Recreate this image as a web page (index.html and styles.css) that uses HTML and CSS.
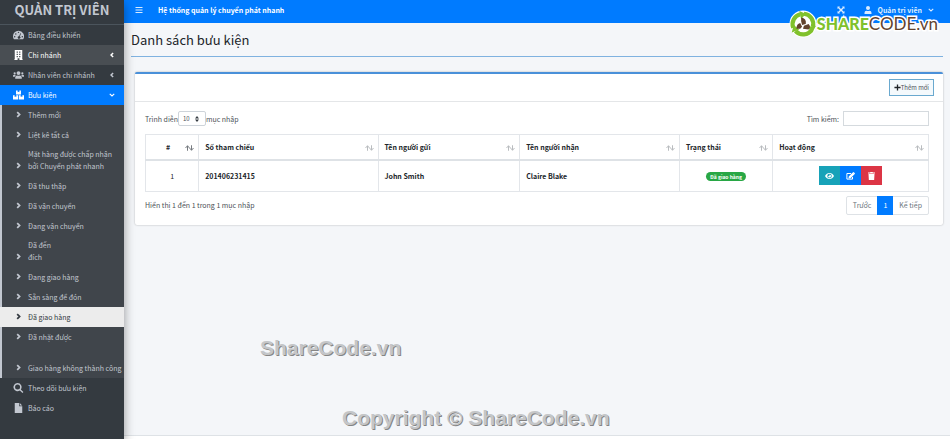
FILE: index.html
```
<!DOCTYPE html>
<html lang="vi">
<head>
    <meta charset="UTF-8">
    <meta name="viewport" content="width=device-width, initial-scale=1.0">
    <title>Danh sách bưu kiện</title>
    <link rel="stylesheet" href="styles.css">
</head>
<body>
    <!-- Icons -->
    <svg class="sprite" aria-hidden="true">
        <symbol id="i-dash" viewBox="0 0 18 16"><path fill-rule="evenodd" d="M9 1a9 9 0 0 0-9 9c0 1.700.4 3.200 1.200 4.600.2.300.5.400.8.400h14c.3 0 .6-.1.800-.4A9 9 0 0 0 9 1zm0 1.500a1.200 1.200 0 1 1 0 2.400 1.200 1.200 0 0 1 0-2.400zM2.800 9.800a1.200 1.200 0 1 1 0 2.400 1.200 1.200 0 0 1 0-2.400zM4.600 5a1.200 1.200 0 1 1 0 2.400A1.200 1.200 0 0 1 4.600 5zm10.600 4.800a1.200 1.200 0 1 1 0 2.400 1.200 1.200 0 0 1 0-2.400zM12 5l1.100.4-1.900 4.900a2.200 2.200 0 1 1-1.100-.4z"/></symbol>
        <symbol id="i-building" viewBox="0 0 14 16"><path fill-rule="evenodd" d="M1 0h12v15h1v1H8.500v-3h-3v3H0v-1h1zM4 2.500v2h2v-2zm4 0v2h2v-2zm-4 3.500v2h2V6zm4 0v2h2V6zM4 9.500v2h2v-2zm4 0v2h2v-2z"/></symbol>
        <symbol id="i-users" viewBox="0 0 20 16"><circle cx="3" cy="5" r="2"/><circle cx="17" cy="5" r="2"/><circle cx="10" cy="4.500" r="3.500"/><path d="M0 11V9.500A2 2 0 0 1 2 7.500h2q1 0 1.400.7A5 5 0 0 0 3.200 11zM20 11V9.500a2 2 0 0 0-2-2h-2q-1 0-1.400.7a5 5 0 0 1 2.200 2.800zM4 15v-2.500A3.500 3.500 0 0 1 7.500 9q2.500 1 5 0a3.500 3.500 0 0 1 3.500 3.500V15z"/></symbol>
        <symbol id="i-boxes" viewBox="0 0 20 16"><path d="M5.500 0h3v3l1.500-.8 1.500.8V0h3v7h-9zM0 8.500h3v3l1.500-.8 1.500.8v-3h3.300V16H0zM10.700 8.500H14v3l1.500-.8 1.500.8v-3h3V16h-9.300z"/></symbol>
        <symbol id="i-search" viewBox="0 0 16 16"><path fill-rule="evenodd" d="M6.500 0a6.500 6.500 0 0 1 5.200 10.300l4.100 4.100-1.500 1.500-4.100-4.100A6.500 6.500 0 1 1 6.500 0zm0 2.500a4 4 0 1 0 0 8 4 4 0 0 0 0-8z"/></symbol>
        <symbol id="i-file" viewBox="0 0 12 16"><path d="M0 0h7v5h5v11H0zM8 0l4 4H8z"/></symbol>
        <symbol id="i-right" viewBox="0 0 10 16"><path d="M2 2.500l5.500 5.500L2 13.500" fill="none" stroke="currentColor" stroke-width="4"/></symbol>
        <symbol id="i-left" viewBox="0 0 10 16"><path d="M8 2.500L2.500 8 8 13.500" fill="none" stroke="currentColor" stroke-width="4"/></symbol>
        <symbol id="i-down" viewBox="0 0 16 10"><path d="M2 2l6 5.500L14 2" fill="none" stroke="currentColor" stroke-width="3"/></symbol>
        <symbol id="i-bars" viewBox="0 0 16 16"><path d="M1 2h14v2H1zM1 7h14v2H1zM1 12h14v2H1z"/></symbol>
        <symbol id="i-expand" viewBox="0 0 16 16"><path d="M1 1h5L4.500 2.500 8 6l3.500-3.500L10 1h5v5l-1.500-1.500L10 8l3.500 3.500L15 10v5h-5l1.500-1.500L8 10l-3.500 3.500L6 15H1v-5l1.500 1.500L6 8 2.500 4.500 1 6z"/></symbol>
        <symbol id="i-user" viewBox="0 0 14 16"><circle cx="7" cy="4" r="4"/><path d="M0 16v-2.500A4.300 4.300 0 0 1 4 9.300q3 1.400 6 0a4.300 4.300 0 0 1 4 4.200V16z"/></symbol>
        <symbol id="i-plus" viewBox="0 0 16 16"><path d="M6.500 1h3v5.500H15v3H9.500V15h-3V9.500H1v-3h5.500z"/></symbol>
        <symbol id="i-sort" viewBox="0 0 18 12"><path class="up" d="M5 1.500v10M1 6l4-4.500L9 6" fill="none"/><path class="down" d="M13 .5v10M9 6l4 4.500L17 6" fill="none"/></symbol>
        <symbol id="i-eye" viewBox="0 0 18 14"><path fill-rule="evenodd" d="M9 1c4 0 7 2.500 9 6-2 3.500-5 6-9 6S2 10.500 0 7c2-3.500 5-6 9-6zm0 1.500a4.500 4.500 0 1 0 0 9 4.500 4.500 0 0 0 0-9zm0 1.500a3 3 0 1 1-3 3l1.500.5L9 6z"/></symbol>
        <symbol id="i-edit" viewBox="0 0 18 16"><path d="M10 3H1.800v11.200H13V10" fill="none" stroke="currentColor" stroke-width="2"/><path d="M13.500 1l3.500 3.500L9 12.300l-4 .6.500-4zM14.200.3q.8-.6 1.500 0l2 2q.6.700 0 1.500l-.5.500-3.500-3.500z"/></symbol>
        <symbol id="i-trash" viewBox="0 0 14 16"><path d="M0 1h4l1-1h4l1 1h4v2H0zM1 4h12l-.7 12H1.700z"/></symbol>
        <symbol id="i-updown" viewBox="0 0 8 12"><path d="M0 5l4-5 4 5zM0 7l4 5 4-5z"/></symbol>
    </svg>

    <aside class="sidebar">
        <a class="brand" href="#">QUẢN TRỊ VIÊN</a>
        <nav class="menu">
            <a class="item" href="#"><svg class="icon"><use href="#i-dash"/></svg>Bảng điều khiển</a>
            <a class="item open" href="#"><svg class="icon"><use href="#i-building"/></svg>Chi nhánh<svg class="arrow"><use href="#i-left"/></svg></a>
            <a class="item" href="#"><svg class="icon"><use href="#i-users"/></svg>Nhân viên chi nhánh<svg class="arrow"><use href="#i-left"/></svg></a>
            <a class="item active" href="#"><svg class="icon"><use href="#i-boxes"/></svg>Bưu kiện<svg class="arrow"><use href="#i-down"/></svg></a>
            <div class="submenu">
                <a class="item" href="#"><svg class="icon"><use href="#i-right"/></svg>Thêm mới</a>
                <a class="item" href="#"><svg class="icon"><use href="#i-right"/></svg>Liệt kê tất cả</a>
                <a class="item tall" href="#"><svg class="icon"><use href="#i-right"/></svg>Mặt hàng được chấp nhận<br>bởi Chuyển phát nhanh</a>
                <a class="item" href="#"><svg class="icon"><use href="#i-right"/></svg>Đã thu thập</a>
                <a class="item" href="#"><svg class="icon"><use href="#i-right"/></svg>Đã vận chuyển</a>
                <a class="item" href="#"><svg class="icon"><use href="#i-right"/></svg>Đang vận chuyển</a>
                <a class="item tall" href="#"><svg class="icon"><use href="#i-right"/></svg>Đã đến<br>đích</a>
                <a class="item" href="#"><svg class="icon"><use href="#i-right"/></svg>Đang giao hàng</a>
                <a class="item" href="#"><svg class="icon"><use href="#i-right"/></svg>Sẵn sàng để đón</a>
                <a class="item current" href="#"><svg class="icon"><use href="#i-right"/></svg>Đã giao hàng</a>
                <a class="item" href="#"><svg class="icon"><use href="#i-right"/></svg>Đã nhặt được</a>
                <a class="item tall" href="#"><svg class="icon"><use href="#i-right"/></svg><br>Giao hàng không thành công</a>
            </div>
            <a class="item" href="#"><svg class="icon"><use href="#i-search"/></svg>Theo dõi bưu kiện</a>
            <a class="item" href="#"><svg class="icon"><use href="#i-file"/></svg>Báo cáo</a>
        </nav>
    </aside>

    <div class="wrapper">
        <header class="navbar">
            <button class="nav-btn" aria-label="Menu"><svg><use href="#i-bars"/></svg></button>
            <a class="nav-title" href="#">Hệ thống quản lý chuyển phát nhanh</a>
            <button class="nav-btn expand" aria-label="Toàn màn hình"><svg><use href="#i-expand"/></svg></button>
            <button class="nav-btn user"><svg><use href="#i-user"/></svg>Quản trị viên<svg class="caret"><use href="#i-down"/></svg></button>
        </header>

        <main class="content">
            <h1>Danh sách bưu kiện</h1>
            <section class="card">
                <div class="card-header">
                    <button class="btn-add"><svg><use href="#i-plus"/></svg>Thêm mới</button>
                </div>
                <div class="card-body">
                    <div class="row">
                        <label class="length">Trình diễn<span class="select"><select><option>10</option><option>25</option></select><svg><use href="#i-updown"/></svg></span>mục nhập</label>
                        <label class="search">Tìm kiếm:<input type="search"></label>
                    </div>
                    <table>
                        <colgroup><col class="c-no"><col class="c-ref"><col class="c-from"><col class="c-to"><col class="c-status"><col></colgroup>
                        <thead>
                            <tr>
                                <th class="center">#<svg class="sort asc"><use href="#i-sort"/></svg></th>
                                <th>Số tham chiếu<svg class="sort"><use href="#i-sort"/></svg></th>
                                <th>Tên người gửi<svg class="sort"><use href="#i-sort"/></svg></th>
                                <th>Tên người nhận<svg class="sort"><use href="#i-sort"/></svg></th>
                                <th>Trạng thái<svg class="sort"><use href="#i-sort"/></svg></th>
                                <th>Hoạt động<svg class="sort"><use href="#i-sort"/></svg></th>
                            </tr>
                        </thead>
                        <tbody>
                            <tr>
                                <td class="center">1</td>
                                <td><b>201406231415</b></td>
                                <td><b>John Smith</b></td>
                                <td><b>Claire Blake</b></td>
                                <td class="center"><span class="badge">Đã giao hàng</span></td>
                                <td>
                                    <div class="actions">
                                        <button class="view" aria-label="Xem"><svg><use href="#i-eye"/></svg></button>
                                        <button class="edit" aria-label="Sửa"><svg><use href="#i-edit"/></svg></button>
                                        <button class="delete" aria-label="Xóa"><svg><use href="#i-trash"/></svg></button>
                                    </div>
                                </td>
                            </tr>
                        </tbody>
                    </table>
                    <div class="row bottom">
                        <span>Hiển thị 1 đến 1 trong 1 mục nhập</span>
                        <nav class="pages">
                            <a href="#">Trước</a><a class="on" href="#">1</a><a href="#">Kế tiếp</a>
                        </nav>
                    </div>
                </div>
            </section>
        </main>
        <footer></footer>
    </div>

    <!-- Watermarks -->
    <div class="logo">
        <svg viewBox="0 0 30 30">
            <circle cx="15" cy="15" r="12" fill="#fff" stroke="#fff" stroke-width="5"/>
            <g fill="none" stroke="#80c12c" stroke-width="4.500">
                <path d="M4.500 19A11 11 0 0 1 12 4.500"/>
                <path d="M16 4a11 11 0 0 1 9.500 14"/>
                <path d="M24.500 21A11 11 0 0 1 7 22.500"/>
            </g>
            <path d="M11 1l7 3-5 6zM29 17l-4 7-5-6zM3 24l2-8 6 5z" fill="#80c12c"/>
            <path d="M13 8q6 1 5 7l-4 1-1-4zM8 20q0-5 4-6l2 4-2 2zM21 15q3 3 0 6l-6-1 1-3z" fill="#63432e"/>
        </svg>
        <span class="share">SHARE</span><span class="code">CODE.vn</span>
    </div>
    <div class="mark mark-mid">ShareCode.vn</div>
    <div class="mark mark-low">Copyright © ShareCode.vn</div>
</body>
</html>
```
FILE: styles.css
```
* {
    box-sizing: border-box;
}

body {
    display: flex;
    min-height: 100vh;
    margin: 0;
    position: relative;
    background-color: #f4f6f9;
    color: #4b5056;
    font-family: "Noto Sans CJK SC", "Noto Sans", sans-serif;
    font-size: 7px;
    line-height: 12px;
}

a {
    color: inherit;
    text-decoration: none;
}

button,
input,
select {
    font: inherit;
    color: inherit;
    margin: 0;
    padding: 0;
    border: none;
    background: none;
}

svg {
    fill: currentColor;
    flex: none;
}

.sprite {
    position: absolute;
    width: 0;
    height: 0;
}

/* Sidebar */
.sidebar {
    flex: none;
    width: 124px;
    background-color: #343a40;
    color: #c2c7d0;
    box-shadow: 0 4px 10px rgba(0, 0, 0, 0.4);
    z-index: 2;
}

.brand {
    display: block;
    height: 25px;
    border-bottom: 1px solid #4b545c;
    font-size: 13px;
    font-weight: bold;
    line-height: 20px;
    text-align: center;
    white-space: nowrap;
}

.item {
    display: block;
    position: relative;
    height: 20px;
    padding: 4px 0 4px 28px;
    white-space: nowrap;
}

.item.tall {
    height: 31px;
    padding-top: 3px;
}

.item .icon {
    position: absolute;
    left: 13px;
    bottom: 5px;
    width: 11px;
    height: 10px;
}

.item .arrow {
    position: absolute;
    right: 9px;
    top: 7px;
    width: 6px;
    height: 6px;
}

.item.open {
    background-color: #494e53;
    color: #fff;
}

.item.active {
    background-color: #007bff;
    color: #fff;
}

.submenu {
    border-left: 2px solid #c2c7d0;
    background-color: #40454b;
}

.submenu .item {
    padding-left: 26px;
}

.submenu .icon {
    width: 7px;
    height: 7px;
    bottom: 7px;
}

.submenu .current {
    margin-left: -2px;
    padding-left: 28px;
    background-color: #ececec;
    color: #343a40;
}

.submenu .current .icon {
    left: 15px;
}

/* Top bar */
.wrapper {
    flex: 1;
    display: flex;
    flex-direction: column;
    min-width: 0;
}

.navbar {
    display: flex;
    align-items: center;
    height: 23px;
    padding: 0 16px 4px 11px;
    background-color: #007bff;
    color: #d9ebff;
}

.nav-btn {
    display: flex;
    align-items: center;
    gap: 6px;
}

.nav-btn svg {
    width: 8px;
    height: 8px;
}

.nav-title {
    margin-left: 15px;
    color: #fff;
    font-weight: bold;
}

.expand {
    margin-left: auto;
}

.user {
    margin-left: 19px;
    font-weight: bold;
}

.nav-btn .caret {
    width: 6px;
    height: 4px;
}

/* Content */
.content {
    flex: 1;
    padding: 0 7px;
}

h1 {
    height: 34px;
    margin: 0 0 15px;
    border-bottom: 1px solid #7fb2e0;
    color: #212529;
    font-size: 13px;
    font-weight: normal;
    line-height: 33px;
}

.card {
    margin: 0 0 0 4px;
    border-top: 2px solid #4a90d9;
    border-radius: 2px;
    background-color: #fff;
    box-shadow: 0 0 2px rgba(0, 0, 0, 0.3);
}

.card-header {
    display: flex;
    justify-content: flex-end;
    height: 28px;
    padding: 5px 9px 0 0;
    border-bottom: 1px solid #e4e6e8;
}

.btn-add {
    display: flex;
    align-items: center;
    height: 17px;
    padding: 0 4px;
    border: 1px solid #6aa9cf;
    background-color: #f4f9fc;
    font-size: 6px;
}

.btn-add svg {
    width: 7px;
    height: 7px;
    color: #212529;
}

.card-body {
    padding: 9px 14px 10px 10px;
}

.row {
    display: flex;
    justify-content: space-between;
    align-items: center;
}

.length,
.search {
    display: flex;
    align-items: center;
}

.select {
    display: flex;
    align-items: center;
    position: relative;
    width: 28px;
    height: 15px;
    border: 1px solid #ced4da;
    border-radius: 2px;
}

.select select {
    width: 100%;
    padding-left: 4px;
    font-size: 6px;
    appearance: none;
}

.select svg {
    position: absolute;
    right: 6px;
    width: 4px;
    height: 6px;
    color: #343a40;
    pointer-events: none;
}

.search input {
    width: 86px;
    height: 15px;
    margin-left: 4px;
    border: 1px solid #d5dade;
}

table {
    width: 100%;
    margin: 8px 0 3px;
    border-collapse: collapse;
    table-layout: fixed;
    color: #212529;
}

.c-no { width: 6.8%; }
.c-ref { width: 22.9%; }
.c-from { width: 18.1%; }
.c-to { width: 20.4%; }
.c-status { width: 11.9%; }

th,
td {
    border: 1px solid #e3e6ea;
    padding: 0 6px;
    text-align: left;
}

th {
    position: relative;
    height: 25px;
    border-bottom: 2px solid #dee2e6;
}

td {
    height: 32px;
}

.center {
    text-align: center;
}

th.center {
    padding-right: 14px;
}

.sort {
    position: absolute;
    right: 4px;
    top: 10px;
    width: 9px;
    height: 6px;
    stroke: #b9bcbf;
    stroke-width: 2;
}

.sort.asc {
    stroke: #777b80;
}

.badge {
    display: inline-block;
    padding: 0 4px;
    border-radius: 5px;
    background-color: #28a745;
    color: #fff;
    font-size: 5px;
    font-weight: bold;
    line-height: 9px;
}

.actions {
    display: flex;
    justify-content: center;
}

.actions button {
    display: flex;
    align-items: center;
    justify-content: center;
    width: 21px;
    height: 19px;
    color: #fff;
}

.actions svg {
    width: 9px;
    height: 8px;
}

.view { background-color: #17a2b8; }
.edit { background-color: #007bff; }
.delete { background-color: #dc3545; }

.bottom {
    height: 20px;
}

.pages {
    display: flex;
    border: 1px solid #dee2e6;
    border-radius: 2px;
    color: #6c757d;
}

.pages a {
    padding: 3px 6px;
    line-height: 11px;
}

.pages .on {
    margin: -1px 0;
    padding: 4px 6px;
    background-color: #007bff;
    color: #fff;
}

footer {
    height: 4px;
    border-top: 1px solid #dee2e6;
    background-color: #fff;
}

/* Watermarks */
.logo {
    display: flex;
    align-items: center;
    position: absolute;
    top: 10px;
    right: 12px;
    z-index: 3;
    font-family: Lato, sans-serif;
    font-size: 17px;
    line-height: 28px;
    -webkit-text-stroke: 3px #fff;
    paint-order: stroke fill;
}

.logo svg {
    width: 28px;
    height: 28px;
    -webkit-text-stroke: 0;
}

.share {
    color: #80c12c;
    font-size: 16px;
    font-weight: 900;
}

.code {
    color: #63432e;
    font-size: 17px;
}

.mark {
    position: absolute;
    color: #c4c6c8;
    font-family: "Liberation Sans", Arial, sans-serif;
    font-size: 21px;
    font-weight: bold;
    line-height: 24px;
    text-shadow: 1px 1px 0 #858585;
    white-space: nowrap;
}

.mark-mid {
    left: 260px;
    top: 336px;
}

.mark-low {
    left: 342px;
    top: 406px;
}
```
